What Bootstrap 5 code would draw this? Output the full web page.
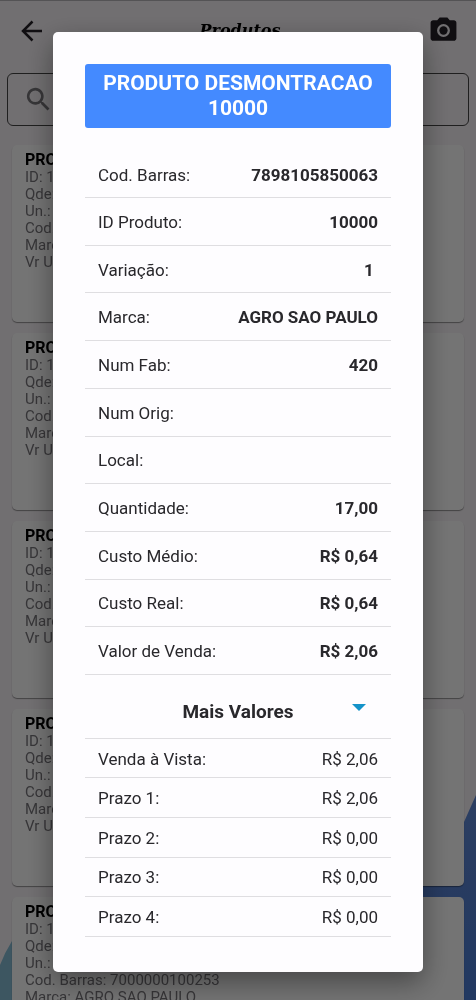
<!DOCTYPE html>
<html lang="pt-BR">
<head>
<meta charset="utf-8">
<meta name="viewport" content="width=device-width, initial-scale=1">
<title>Produtos</title>
<link href="https://cdn.jsdelivr.net/npm/bootstrap@5.3.0/dist/css/bootstrap.min.css" rel="stylesheet">
<style>
  body { font-family: Roboto, sans-serif; background: #f6f2f6; color: #29282c; height: 100vh; overflow: hidden; }
  .backdrop-art { inset: 0; z-index: -1; }
  .app-header { height: 60px; padding: 0 17px 0 20px; border-top: 1px solid #b8b5b9; }
  .app-title { font: italic 900 16px/24px "DejaVu Serif", serif; color: #000; padding-left: 8px; }
  .icon-btn { line-height: 0; color: #241f26; }
  .search-box { height: 53px; margin: 13px 7px 0; padding-left: 15px; border: 1px solid #444; border-radius: 6px; }
  .search-box input { background: none; }
  .product-list { padding: 19px 12px 0; gap: 11px; }
  .product-card { min-height: 177px; padding: 6px 13px; background: #fdfcfd; border-radius: 5px; box-shadow: 0 1px 1px #0006; font-size: 15px; line-height: 17px; color: #77757a; }
  .product-card h2 { font-size: 16px; line-height: 18px; font-weight: 700; color: #000; margin: 0; }
  .product-card p { margin: 0; }
  .modal-backdrop { --bs-backdrop-opacity: .54; }
  .modal-dialog { max-width: none; margin: 32px 53px 28px; }
  .modal-content { padding: 32px 32px 35px; border: 0; border-radius: 5px; background: #fefdff; box-shadow: 0 10px 28px #0006; }
  .product-name { background: #448aff; color: #fff; font-size: 21px; line-height: 25px; font-weight: 700; padding: 7px 12px; border-radius: 3px; margin: 0 0 23px; }
  .values { width: 100%; font-size: 17px; line-height: 20px; white-space: nowrap; }
  .values th, .values td { padding: 1px 0 0; border-bottom: 1px solid #dfdee1; vertical-align: middle; }
  .values th { font-weight: 400; padding-left: 13px; }
  .values td { text-align: right; font-weight: 700; padding-right: 13px; }
  .main-values { height: 524px; }
  .more-values { height: 198px; }
  .more-values td { font-weight: 400; }
  .more-toggle { height: 64px; padding-top: 17px; font-size: 19px; line-height: 24px; font-weight: 700; color: inherit; border-bottom: 1px solid #dfdee1; }
  .more-toggle svg { right: 25px; top: 29px; }
</style>
</head>
<body>
<svg class="backdrop-art position-fixed w-100 h-100" viewBox="0 0 476 1000" preserveAspectRatio="none" aria-hidden="true">
  <defs><linearGradient id="deep" x1="0" y1="0" x2="0" y2="1"><stop offset="0" stop-color="#5f89d6"/><stop offset=".4" stop-color="#5882d2"/><stop offset="1" stop-color="#4a7cd4"/></linearGradient></defs>
  <path d="M476 795L464 822L420 880V1000H476Z" fill="url(#deep)"/>
  <path d="M12 941Q5 952 0 965V1000H30V906Z" fill="#86bcd4"/>
</svg>

<header class="app-header d-flex align-items-center justify-content-between">
  <button type="button" class="btn p-0 border-0 icon-btn" aria-label="Voltar"><svg width="24" height="24" viewBox="0 0 24 24" fill="none" stroke="currentColor" stroke-width="2.500"><path d="M22 12H3M12.500 2.500L3 12l9.500 9.500"/></svg></button>
  <h1 class="app-title m-0">Produtos</h1>
  <button type="button" class="btn p-0 border-0 icon-btn" aria-label="Câmera"><svg width="31" height="31" viewBox="0 0 24 24" fill="currentColor"><circle cx="12" cy="12" r="3.200"/><path d="M9 2L7.170 4H4c-1.100 0-2 .9-2 2v12c0 1.100.9 2 2 2h16c1.100 0 2-.9 2-2V6c0-1.100-.9-2-2-2h-3.170L15 2H9zm3 15a5 5 0 1 1 0-10 5 5 0 0 1 0 10z"/></svg></button>
</header>
<main>
  <div class="search-box d-flex align-items-center">
    <svg class="flex-shrink-0" width="31" height="31" viewBox="0 0 24 24" fill="#77757a" aria-hidden="true"><path d="M15.500 14h-.79l-.28-.27A6.500 6.500 0 1 0 13.730 14.430l.27.28v.79l5 4.990L20.490 19l-4.990-5zm-6 0a4.500 4.500 0 1 1 0-9 4.500 4.500 0 0 1 0 9z"/></svg>
    <input type="search" class="form-control border-0" aria-label="Pesquisar produto">
  </div>
  <div class="product-list d-flex flex-column">
    <article class="product-card"><h2>PRODUTO</h2><p>ID: 10000</p><p>Qde: 17,00</p><p>Un.: UN</p><p>Cod. Barras:</p><p>Marca:</p><p>Vr Un.:</p></article>
    <article class="product-card"><h2>PRODUTO</h2><p>ID: 10001</p><p>Qde: 17,00</p><p>Un.: UN</p><p>Cod. Barras:</p><p>Marca:</p><p>Vr Un.:</p></article>
    <article class="product-card"><h2>PRODUTO</h2><p>ID: 10002</p><p>Qde: 17,00</p><p>Un.: UN</p><p>Cod. Barras:</p><p>Marca:</p><p>Vr Un.:</p></article>
    <article class="product-card"><h2>PRODUTO</h2><p>ID: 10003</p><p>Qde: 17,00</p><p>Un.: UN</p><p>Cod. Barras:</p><p>Marca:</p><p>Vr Un.:</p></article>
    <article class="product-card"><h2>PRODUTO</h2><p>ID: 10004</p><p>Qde: 17,00</p><p>Un.: UN</p><p>Cod. Barras: 7000000100253</p><p>Marca: AGRO SAO PAULO</p></article>
  </div>
</main>

<div class="modal-backdrop show"></div>
<div class="modal d-block" role="dialog" aria-modal="true" aria-labelledby="productName">
  <div class="modal-dialog">
    <div class="modal-content">
      <h2 id="productName" class="product-name text-center">PRODUTO DESMONTRACAO 10000</h2>
      <table class="values main-values">
        <tbody>
        <tr><th scope="row">Cod. Barras:</th><td>7898105850063</td></tr>
        <tr><th scope="row">ID Produto:</th><td>10000</td></tr>
        <tr><th scope="row">Variação:</th><td>1&nbsp;</td></tr>
        <tr><th scope="row">Marca:</th><td>AGRO SAO PAULO</td></tr>
        <tr><th scope="row">Num Fab:</th><td>420</td></tr>
        <tr><th scope="row">Num Orig:</th><td></td></tr>
        <tr><th scope="row">Local:</th><td></td></tr>
        <tr><th scope="row">Quantidade:</th><td>17,00</td></tr>
        <tr><th scope="row">Custo Médio:</th><td>R$ 0,64</td></tr>
        <tr><th scope="row">Custo Real:</th><td>R$ 0,64</td></tr>
        <tr><th scope="row">Valor de Venda:</th><td>R$ 2,06</td></tr>
        </tbody>
      </table>
      <button type="button" class="btn rounded-0 border-top-0 border-start-0 border-end-0 position-relative more-toggle" aria-expanded="true" aria-controls="moreValues">Mais Valores
        <svg class="position-absolute" width="14" height="8" viewBox="0 0 14 8" fill="#1593c9" aria-hidden="true"><path d="M0 0H14L7 7Z"/></svg>
      </button>
      <table class="values more-values" id="moreValues">
        <tbody>
        <tr><th scope="row">Venda à Vista:</th><td>R$ 2,06</td></tr>
        <tr><th scope="row">Prazo 1:</th><td>R$ 2,06</td></tr>
        <tr><th scope="row">Prazo 2:</th><td>R$ 0,00</td></tr>
        <tr><th scope="row">Prazo 3:</th><td>R$ 0,00</td></tr>
        <tr><th scope="row">Prazo 4:</th><td>R$ 0,00</td></tr>
        </tbody>
      </table>
    </div>
  </div>
</div>
<script src="https://cdn.jsdelivr.net/npm/bootstrap@5.3.0/dist/js/bootstrap.bundle.min.js"></script>
</body>
</html>
